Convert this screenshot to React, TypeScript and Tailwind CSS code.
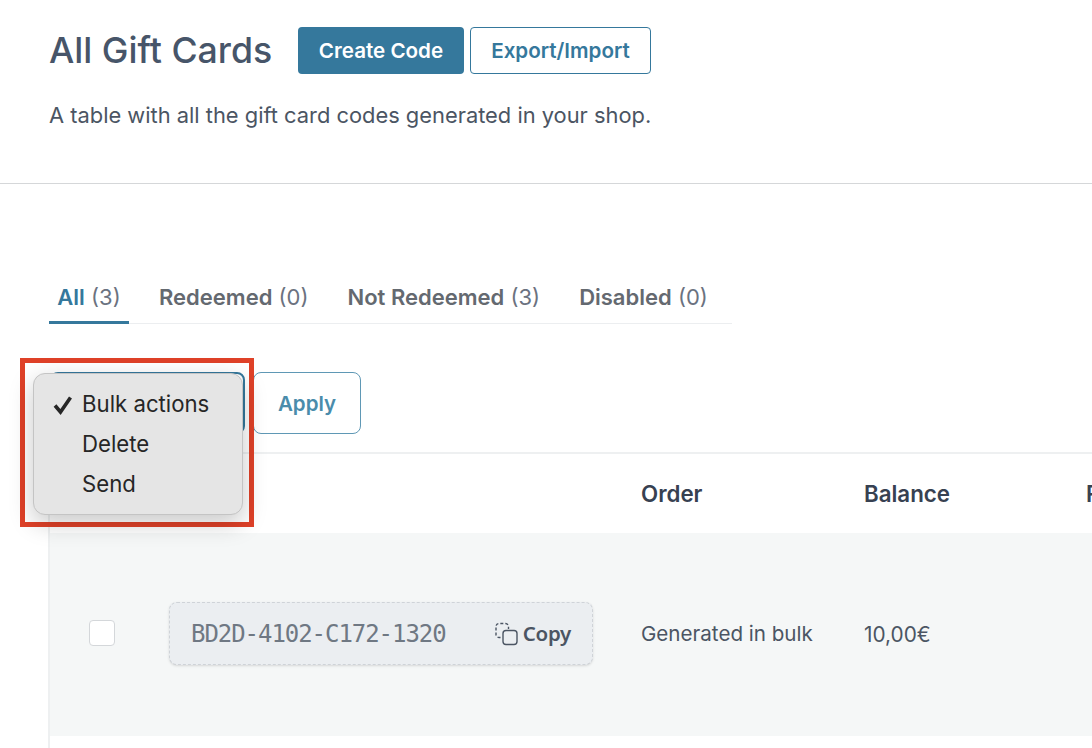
import React from "react";

const sans = { fontFamily: "Inter, 'Liberation Sans', sans-serif" };

function CopyIcon() {
  return (
    <svg width="24" height="24" viewBox="0 0 24 24" fill="none" stroke="#4b5563" strokeWidth="1.4" className="shrink-0">
      <rect x="9" y="8.5" width="14" height="14" rx="3" />
      <path d="M6.5 15.5H5a3 3 0 0 1-3-3V4.5a3 3 0 0 1 3-3h6.5a3 3 0 0 1 3 3V7" strokeDasharray="3 2" />
    </svg>
  );
}

export default function App() {
  return (
    <div className="relative w-[1092px] h-[748px] overflow-hidden bg-white" style={sans}>
      <header className="h-[184px] border-b border-[#d5d7d9] pl-[49px] pt-[27px]">
        <div className="flex items-center h-[47px]">
          <h1 className="text-[35.7px] leading-[47px] font-medium text-[#475569] w-[249px] shrink-0">All Gift Cards</h1>
          <button className="h-[47px] w-[166px] pt-[2px] rounded-[4px] bg-[#35789c] text-white text-[20.6px] font-semibold">Create Code</button>
          <button className="ml-[6px] h-[47px] w-[181px] pt-[2px] rounded-[4px] border border-[#35789c] bg-white text-[#35789c] text-[20.6px] font-semibold">Export/Import</button>
        </div>
        <p className="mt-[27px] text-[21.87px] leading-[28px] text-[#4b5563]">A table with all the gift card codes generated in your shop.</p>
      </header>

      <nav className="mt-[95px] ml-[49px] w-[683px] h-[45px] border-b border-[#eceef0] flex text-[22px] leading-[36px] text-[#6b7280]">
        <div className="w-[80px] h-[45px] border-b-[3px] border-[#35789c] text-center"><span className="font-semibold text-[#35789c]">All</span> (3)</div>
        <div className="ml-[30px]"><span className="font-semibold text-[#646970]">Redeemed</span> (0)</div>
        <div className="ml-[39px]"><span className="font-semibold text-[#646970]">Not Redeemed</span> (3)</div>
        <div className="ml-[39px]"><span className="font-semibold text-[#646970]">Disabled</span> (0)</div>
      </nav>

      <div className="mt-[48px] ml-[50px] flex gap-[8px]">
        <div className="w-[195px] h-[62px] rounded-[8px] border-2 border-[#35789c] bg-white" />
        <button className="w-[108px] h-[62px] pt-[2px] rounded-[8px] border border-[#5f98b5] bg-white text-[#4a8cab] text-[20.5px] font-semibold">Apply</button>
      </div>

      <section className="mt-[18px] ml-[48px] w-[1200px] h-[320px] border-l-2 border-t-2 border-[#eef0f1]">
        <div className="h-[79px] flex items-center text-[22.3px] font-semibold text-[#374151]">
          <span className="ml-[591px] w-[223px] shrink-0">Order</span>
          <span className="w-[222px] shrink-0">Balance</span>
          <span className="shrink-0">Recipient</span>
        </div>
        <div className="h-[203px] bg-[#f5f7f7] flex items-center">
          <span className="ml-[39px] w-[26px] h-[26px] -mt-[3px] rounded-[4px] border border-[#d4d7da] bg-white shrink-0" />
          <div className="ml-[54px] w-[424px] h-[63px] -mt-[2px] shrink-0 rounded-[8px] border border-dashed border-[#cfd3d8] bg-[#ebeef1] shadow-sm flex items-center pl-[21px] pr-[21px]">
            <span className="text-[24px] text-[#6f7883]" style={{ fontFamily: "'DejaVu Sans Mono', monospace", letterSpacing: "-1.05px" }}>BD2D-4102-C172-1320</span>
            <span className="ml-auto flex items-center gap-[5px] text-[20.5px] font-semibold text-[#4b5563]" style={{ fontFamily: "'Noto Sans', sans-serif", letterSpacing: "-0.3px" }}>
              <CopyIcon />Copy
            </span>
          </div>
          <span className="ml-[48px] w-[223px] shrink-0 text-[20.6px] text-[#4b5563]">Generated in bulk</span>
          <span className="text-[20.8px] text-[#4b5563]">10,00€</span>
        </div>
      </section>

      <div className="absolute left-[20px] top-[358px] w-[234px] h-[169px] border-[5px] border-[#df4128]" />
      <div className="absolute left-[33px] top-[373px] w-[210px] h-[142px] rounded-[12px] border border-[#c4c4c4] bg-[#e5e5e5] shadow-[0_8px_24px_rgba(0,0,0,0.22)] pt-[10px] text-[22.2px] leading-[40px] text-[#262626]">
        <div className="relative pl-[48px]">
          <svg className="absolute left-[19px] top-[11px]" width="20" height="20" viewBox="0 0 20 20" fill="none" stroke="#262626" strokeWidth="3.6"><path d="M2 10.5 7.5 17 17.5 2.5" /></svg>
          Bulk actions
        </div>
        <div className="pl-[48px]">Delete</div>
        <div className="pl-[48px]">Send</div>
      </div>
    </div>
  );
}
